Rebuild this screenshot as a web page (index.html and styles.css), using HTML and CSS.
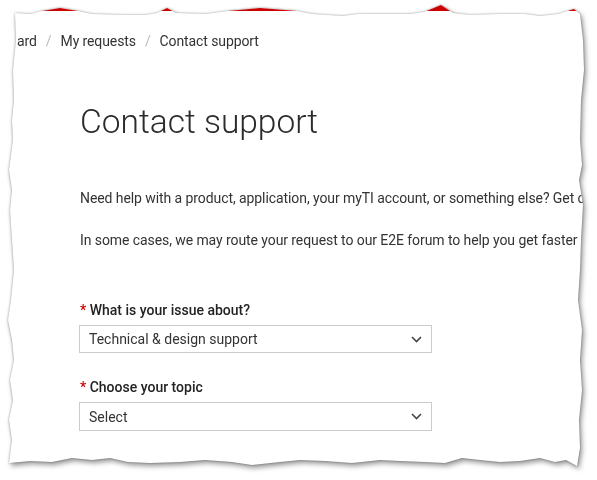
FILE: index.html
```html
<!DOCTYPE html>
<html lang="en">
<head>
<meta charset="utf-8">
<title>Contact support</title>
<link rel="stylesheet" href="styles.css">
</head>
<body>
<div class="shadow">
  <div class="paper">
    <div class="topbar"></div>
    <nav class="crumbs">
      <span class="crumb">ard</span>
      <span class="sep">/</span>
      <span class="crumb">My requests</span>
      <span class="sep">/</span>
      <span class="crumb">Contact support</span>
    </nav>
    <main class="content">
      <h1 class="title">Contact support</h1>
      <p class="intro">Need help with a product, application, your myTI account, or something else? Get our experts to help you.</p>
      <p class="intro second">In some cases, we may route your request to our E2E forum to help you get faster answers.</p>
      <div class="field">
        <div class="label"><span class="req">*</span> What is your issue about?</div>
        <div class="select">
          <span class="value">Technical &amp; design support</span>
          <svg class="chev" width="11" height="7" viewBox="0 0 11 7"><polyline points="1,1 5.5,5.5 10,1" fill="none" stroke="#444" stroke-width="1.6"/></svg>
        </div>
      </div>
      <div class="field">
        <div class="label"><span class="req">*</span> Choose your topic</div>
        <div class="select tall">
          <span class="value">Select</span>
          <svg class="chev" width="11" height="7" viewBox="0 0 11 7"><polyline points="1,1 5.5,5.5 10,1" fill="none" stroke="#444" stroke-width="1.6"/></svg>
        </div>
      </div>
    </main>
  </div>
</div>
</body>
</html>
```
FILE: styles.css
```css
html, body {
  margin: 0;
  padding: 0;
  background: #ffffff;
}
body {
  width: 597px;
  height: 480px;
  overflow: hidden;
  font-family: Roboto, "Liberation Sans", Arial, sans-serif;
  color: #333333;
}
.shadow {
  width: 597px;
  height: 480px;
  filter: drop-shadow(0 0 1px rgba(0,0,0,0.35)) drop-shadow(2px 3px 2.5px rgba(0,0,0,0.4));
}
.paper {
  width: 597px;
  height: 480px;
  background: #ffffff;
  overflow: hidden;
  white-space: nowrap;
  clip-path: polygon(
    15px 13px, 30px 14px, 42px 11px, 60px 8px, 78px 11px, 92px 14px, 125px 15px, 145px 15px,
    157px 13px, 167px 8px, 176px 13px, 205px 14px, 228px 11px, 260px 8px, 297px 11px,
    312px 14px, 343px 16px, 358px 14px, 385px 14px, 410px 14px, 424px 12px, 441px 5px,
    453px 13px, 470px 15px, 500px 14px, 525px 14px, 540px 16px, 558px 14px, 574px 9px,
    580px 14px, 583px 40px, 584px 70px, 581px 100px, 580px 140px, 582px 165px, 579px 180px,
    583px 205px, 581px 240px, 580px 270px, 578px 300px, 582px 330px, 580px 360px,
    582px 390px, 579px 420px, 580px 448px, 577px 466px, 566px 460px, 555px 462px,
    540px 458px, 520px 461px, 500px 462px, 480px 460px, 462px 458px, 445px 463px,
    425px 462px, 400px 461px, 380px 460px, 352px 463px, 325px 461px, 300px 460px,
    280px 462px, 252px 465px, 232px 462px, 205px 460px, 180px 462px, 150px 463px,
    128px 462px, 110px 458px, 92px 460px, 72px 458px, 52px 462px, 30px 461px, 9px 463px,
    12px 440px, 9px 420px, 13px 400px, 10px 380px, 14px 360px, 12px 340px, 8px 320px,
    11px 300px, 14px 270px, 12px 240px, 10px 210px, 12px 190px, 9px 170px, 13px 140px,
    12px 120px, 14px 100px, 13px 70px, 16px 40px
  );
}
.topbar {
  height: 11px;
  background: #cc0000;
}
.crumbs {
  display: flex;
  align-items: center;
  gap: 9px;
  margin-top: 20px;
  padding-left: 17px;
  height: 20px;
  font-size: 14px;
  line-height: 20px;
  letter-spacing: -0.1px;
  color: #333333;
}
.sep {
  color: #bbbbbb;
}
.content {
  padding-left: 80px;
}
.title {
  margin: 51px 0 0 0;
  font-size: 33.5px;
  line-height: 40px;
  font-weight: 300;
  color: #2b2b2b;
}
.intro {
  margin: 46px 0 0 0;
  font-size: 14px;
  line-height: 20px;
  letter-spacing: -0.08px;
}
.intro.second {
  margin-top: 22px;
}
.field {
  margin-top: 50px;
}
.field + .field {
  margin-top: 24px;
}
.label {
  font-size: 14px;
  line-height: 20px;
  font-weight: 500;
  color: #222222;
}
.req {
  color: #cc0000;
}
.select {
  margin-top: 5px;
  margin-left: -1px;
  height: 26px;
  border: 1px solid #cccccc;
  display: flex;
  align-items: center;
  justify-content: space-between;
  padding: 0 9px 0 9px;
  box-sizing: content-box;
  width: 333px;
  font-size: 14px;
  color: #333333;
}
.select.tall {
  height: 27px;
}
.chev {
  display: block;
}
```
